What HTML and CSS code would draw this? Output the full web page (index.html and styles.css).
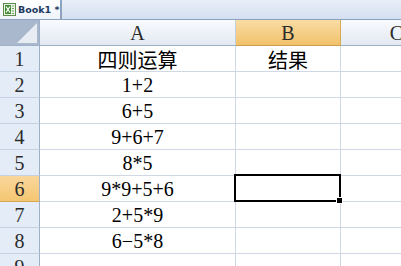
FILE: index.html
```html
<!DOCTYPE html>
<html>
<head>
<meta charset="utf-8">
<link rel="stylesheet" href="styles.css">
</head>
<body>
<div class="tabbar">
  <div class="tab">
    <svg class="xl" width="13" height="13" viewBox="0 0 13 13">
      <rect x="0.5" y="0.5" width="12" height="12" fill="#e9f2e4" stroke="#5d8a4d"/>
      <rect x="2" y="2" width="6" height="9" fill="#3d8a2f"/>
      <path d="M3 3.5 L7 9.5 M7 3.5 L3 9.5" stroke="#fff" stroke-width="1.3"/>
      <path d="M9 3 H11 M9 5.5 H11 M9 8 H11 M9 10.5 H11" stroke="#7aa56a" stroke-width="1"/>
    </svg>
    <span class="tabname">Book1 *</span>
  </div>
</div>
<div class="sheet">
  <div class="corner"><div class="tri"></div></div>
  <div class="ch">A</div>
  <div class="ch sel">B</div>
  <div class="ch">C</div>

  <div class="rh">1</div><div class="c">四则运算</div><div class="c">结果</div><div class="c"></div>
  <div class="rh">2</div><div class="c">1+2</div><div class="c"></div><div class="c"></div>
  <div class="rh">3</div><div class="c">6+5</div><div class="c"></div><div class="c"></div>
  <div class="rh">4</div><div class="c">9+6+7</div><div class="c"></div><div class="c"></div>
  <div class="rh">5</div><div class="c">8*5</div><div class="c"></div><div class="c"></div>
  <div class="rh sel">6</div><div class="c">9*9+5+6</div><div class="c active"><div class="box"><span class="handle"></span></div></div><div class="c"></div>
  <div class="rh">7</div><div class="c">2+5*9</div><div class="c"></div><div class="c"></div>
  <div class="rh">8</div><div class="c">6−5*8</div><div class="c"></div><div class="c"></div>
  <div class="rh">9</div><div class="c"></div><div class="c"></div><div class="c"></div>
</div>
</body>
</html>
```
FILE: styles.css
```css
html, body {
  margin: 0;
  padding: 0;
  width: 401px;
  height: 266px;
  overflow: hidden;
  background: #fff;
}
.tabbar {
  height: 19px;
  background: linear-gradient(#e9eff8, #d3dff0);
  border-bottom: 1px solid #8da2bf;
  display: flex;
  align-items: flex-end;
}
.tab {
  height: 19px;
  width: 62px;
  box-sizing: border-box;
  background: linear-gradient(#ffffff, #eef3fa);
  border-right: 2px solid #8ea3c0;
  display: flex;
  align-items: center;
  gap: 2px;
  padding-left: 3px;
  white-space: nowrap;
}
.xl { flex: none; }
.tabname {
  font-family: "DejaVu Sans", "Liberation Sans", sans-serif;
  font-weight: bold;
  font-size: 9.5px;
  color: #1f3a5f;
}
.sheet {
  display: grid;
  grid-template-columns: 40px 196px 105px 112px;
  grid-auto-rows: 26px;
  font-family: "Liberation Serif", "Noto Sans CJK SC", serif;
}
.corner {
  background: #a9b8cc;
  border-right: 1px solid #9eb0c6;
  border-bottom: 1px solid #9eb0c6;
  box-sizing: border-box;
  position: relative;
  overflow: hidden;
}
.tri {
  position: absolute;
  right: 2px;
  bottom: 2px;
  width: 0;
  height: 0;
  border-left: 20px solid transparent;
  border-bottom: 20px solid #e8edf3;
}
.ch {
  box-sizing: border-box;
  background: linear-gradient(#f8fafd, #e3e9f2);
  border-right: 1px solid #c5d0de;
  border-bottom: 1px solid #9eb0c6;
  display: flex;
  align-items: center;
  justify-content: center;
  font-size: 20px;
  color: #2b2b2b;
  padding-top: 2px;
}
.ch.sel {
  background: linear-gradient(#f9dca4, #f2c26b);
  border-right-color: #d9a956;
  border-bottom-color: #c99a4a;
}
.rh {
  box-sizing: border-box;
  background: #e4ecf7;
  border-right: 1px solid #9eb0c6;
  border-bottom: 1px solid #c5d2e3;
  display: flex;
  align-items: center;
  justify-content: center;
  font-size: 20px;
  color: #2b2b2b;
  padding-top: 2px;
}
.rh.sel {
  background: linear-gradient(#f9d79c, #f4c671);
  border-bottom-color: #d7a955;
}
.c {
  box-sizing: border-box;
  border-right: 1px solid #d0d7e5;
  border-bottom: 1px solid #d0d7e5;
  display: flex;
  align-items: center;
  justify-content: center;
  font-size: 20px;
  color: #000;
  font-family: "Liberation Serif", "Noto Sans CJK SC", serif;
  padding-top: 2px;
  white-space: nowrap;
}
.c.active { position: relative; }
.box {
  position: absolute;
  left: -2px;
  top: -2px;
  right: -1px;
  bottom: -1px;
  border: 2px solid #000;
}
.handle {
  position: absolute;
  right: -4px;
  bottom: -4px;
  width: 5px;
  height: 5px;
  background: #000;
  border: 1px solid #fff;
}
```
